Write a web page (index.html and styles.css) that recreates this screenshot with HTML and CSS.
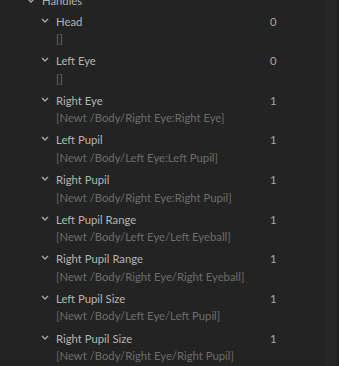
FILE: index.html
```html
<!DOCTYPE html>
<html>
    <head>
        <meta charset="utf-8">
        <title>Handles</title>
        <link rel="stylesheet" href="styles.css">
    </head>
    <body>
        <main class="panel">
            <div class="group">
                <div class="grouphead">
                    <svg class="chev" width="8" height="5" viewBox="0 0 8 5"><path d="M1 1 L4 4 L7 1" /></svg>
                    <span>Handles</span>
                </div>
                <ul class="handles">
                    <li><div class="title"><svg class="chev" width="8" height="5" viewBox="0 0 8 5"><path d="M1 1 L4 4 L7 1" /></svg><span class="name">Head</span><span class="count">0</span></div><div class="path">[]</div></li>
                    <li><div class="title"><svg class="chev" width="8" height="5" viewBox="0 0 8 5"><path d="M1 1 L4 4 L7 1" /></svg><span class="name">Left Eye</span><span class="count">0</span></div><div class="path">[]</div></li>
                    <li><div class="title"><svg class="chev" width="8" height="5" viewBox="0 0 8 5"><path d="M1 1 L4 4 L7 1" /></svg><span class="name">Right Eye</span><span class="count">1</span></div><div class="path">[Newt /Body/Right Eye:Right Eye]</div></li>
                    <li><div class="title"><svg class="chev" width="8" height="5" viewBox="0 0 8 5"><path d="M1 1 L4 4 L7 1" /></svg><span class="name">Left Pupil</span><span class="count">1</span></div><div class="path">[Newt /Body/Left Eye:Left Pupil]</div></li>
                    <li><div class="title"><svg class="chev" width="8" height="5" viewBox="0 0 8 5"><path d="M1 1 L4 4 L7 1" /></svg><span class="name">Right Pupil</span><span class="count">1</span></div><div class="path">[Newt /Body/Right Eye:Right Pupil]</div></li>
                    <li><div class="title"><svg class="chev" width="8" height="5" viewBox="0 0 8 5"><path d="M1 1 L4 4 L7 1" /></svg><span class="name">Left Pupil Range</span><span class="count">1</span></div><div class="path">[Newt /Body/Left Eye/Left Eyeball]</div></li>
                    <li><div class="title"><svg class="chev" width="8" height="5" viewBox="0 0 8 5"><path d="M1 1 L4 4 L7 1" /></svg><span class="name">Right Pupil Range</span><span class="count">1</span></div><div class="path">[Newt /Body/Right Eye/Right Eyeball]</div></li>
                    <li><div class="title"><svg class="chev" width="8" height="5" viewBox="0 0 8 5"><path d="M1 1 L4 4 L7 1" /></svg><span class="name">Left Pupil Size</span><span class="count">1</span></div><div class="path">[Newt /Body/Left Eye/Left Pupil]</div></li>
                    <li><div class="title"><svg class="chev" width="8" height="5" viewBox="0 0 8 5"><path d="M1 1 L4 4 L7 1" /></svg><span class="name">Right Pupil Size</span><span class="count">1</span></div><div class="path">[Newt /Body/Right Eye/Right Pupil]</div></li>
                </ul>
            </div>
            <div class="scrolltrack"></div>
        </main>
    </body>
</html>
```
FILE: styles.css
```css
html, body {margin:0;padding:0;height:100%;background:#232323;overflow:hidden;}
body {font-family:Lato, "Noto Sans", sans-serif;font-size:11.3px;color:#b4b4b4;}
.panel {display:flex;height:100%;}
.group {flex:1;margin-top:-9px;}
.grouphead {display:flex;align-items:center;height:18px;padding-left:27px;margin-bottom:3px;}
.grouphead .chev {margin-right:7px;}
.grouphead span {color:#b0b0b0;}
.chev {flex:none;}
.chev path {fill:none;stroke:#a8a8a8;stroke-width:1.4;}
.handles {list-style:none;margin:0;padding:0;}
.handles li {height:39.625px;padding-left:41px;}
.title {display:flex;align-items:center;height:18px;}
.title .chev {margin-right:7px;margin-top:-2px;}
.name {flex:1;color:#b4b4b4;}
.count {width:55px;color:#a8a8a8;}
.path {height:18px;line-height:18px;padding-left:15px;color:#6c6c6c;white-space:nowrap;}
.scrolltrack {width:11px;background:#262626;border-left:1px solid #252525;border-right:2px solid #1d1d1d;}
```
